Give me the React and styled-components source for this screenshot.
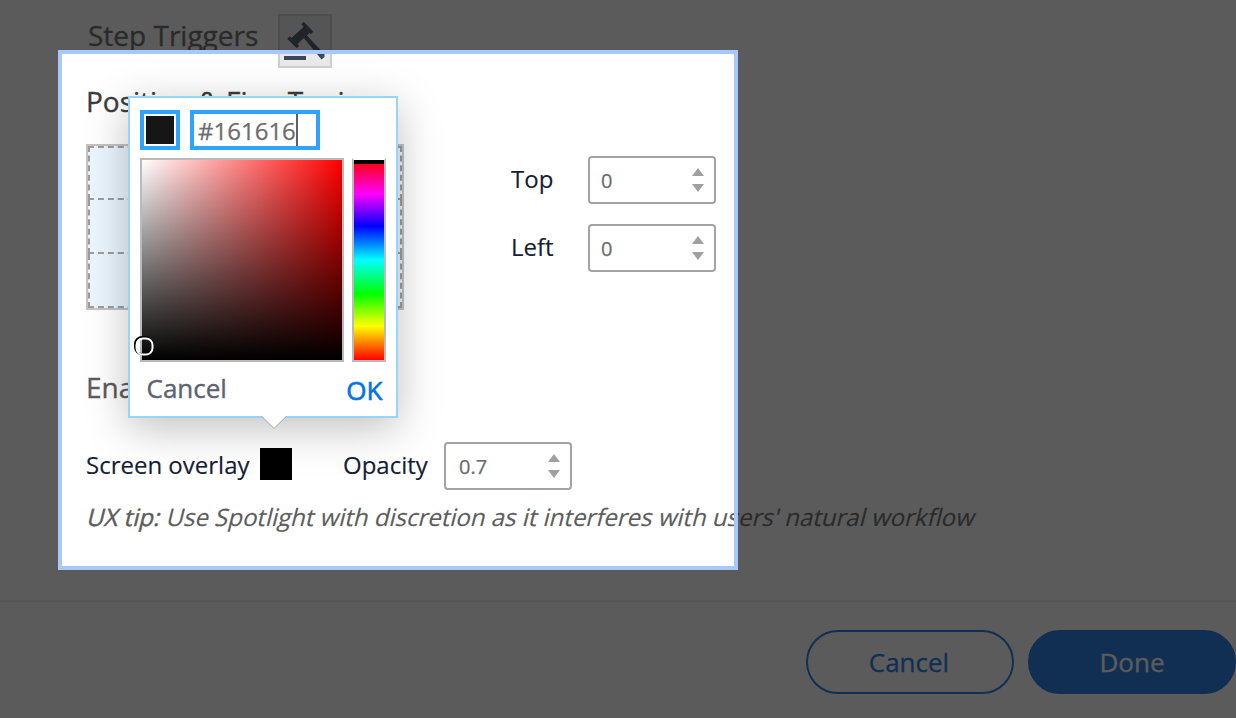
import React from "react";
import styled, { createGlobalStyle, css } from "styled-components";

const Global = createGlobalStyle`
  *, *::before, *::after { box-sizing: border-box; }
  body { margin: 0; background: #fff; overflow: hidden; }
  button, input { font: inherit; }
`;

const Page = styled.main`
  position: relative;
  width: 1236px;
  height: 718px;
  overflow: hidden;
  background: #fff;
  font-family: "Open Sans", "Noto Sans", sans-serif;
  color: #152035;
`;

const Content = styled.div`
  height: 600px;
  padding: 14px 0 0 86px;
`;

const TriggerRow = styled.div`
  display: flex;
  height: 54px;
`;

const Heading = styled.h2`
  margin: 0;
  font-size: 28px;
  line-height: 34px;
  font-weight: 400;
  white-space: nowrap;
  color: ${(p) => p.$color || "#3c3c3c"};
  -webkit-text-stroke: 0.35px currentColor;
`;

const TriggerTitle = styled(Heading)`
  width: 192px;
  padding: 4px 0 0 2px;
`;

const TriggerButton = styled.button`
  width: 54px;
  height: 54px;
  padding: 0;
  border: 2px solid #cfcfcf;
  background: #e9e9e9;
  svg { display: block; }
`;

const PositionTitle = styled(Heading)`
  margin-top: 16px;
  height: 60px;
`;

const PositionRow = styled.div`
  display: flex;
  height: 166px;
`;

const PlacementGrid = styled.div`
  width: 318px;
  height: 166px;
  display: grid;
  grid-template-rows: 54px 54px 1fr;
  border: 2px solid #c4c4c4;
  background: #ebf6ff;
`;

const PlacementCell = styled.div`
  border: 2px dashed #9d9d9d;
  border-top-width: ${(p) => (p.$first ? "2px" : "0")};
`;

const Offsets = styled.div`
  display: flex;
  flex-direction: column;
  gap: 20px;
  padding: 12px 0 0 107px;
`;

const OffsetField = styled.label`
  display: grid;
  grid-template-columns: 77px 128px;
  height: 48px;
`;

const Label = styled.span`
  font-size: 24px;
  line-height: 46px;
  white-space: nowrap;
  -webkit-text-stroke: 0.15px currentColor;
`;

const NumberBox = styled.span`
  display: flex;
  align-items: center;
  justify-content: space-between;
  width: 128px;
  height: 48px;
  padding: 0 10px 0 ${(p) => p.$inset}px;
  border: 2px solid #a3a3a3;
  border-radius: 4px;
  background: #fff;
  color: #6c6c6c;
  font-size: 20px;
  line-height: 44px;
  -webkit-text-stroke: 0.25px currentColor;
`;

const NumberValue = styled.span`
  padding-top: 2px;
  line-height: 42px;
`;

const SpotlightTitle = styled(Heading)`
  margin-top: 60px;
  height: 72px;
`;

const OverlayRow = styled.div`
  display: flex;
  height: 48px;
`;

const OverlayLabel = styled(Label)`
  width: 174px;
`;

const OpacityLabel = styled(Label)`
  width: 101px;
  margin-left: 51px;
`;

const Swatch = styled.span`
  flex: none;
  width: 32px;
  height: 32px;
  margin: 6px 0 0 0;
  background: #000;
`;

const Tip = styled.p`
  width: max-content;
  margin: 10px 0 0 2px;
  font-size: 24px;
  line-height: 34px;
  white-space: nowrap;
  color: #5c5c5c;
  transform: skewX(-14deg);
  -webkit-text-stroke: 0.15px currentColor;
  b { font-weight: 400; -webkit-text-stroke: 0.4px currentColor; }
`;

const Footer = styled.footer`
  display: flex;
  justify-content: flex-end;
  gap: 14px;
  height: 118px;
  padding-top: 28px;
  border-top: 2px solid #ececec;
`;

const PillButton = styled.button`
  width: 208px;
  height: 64px;
  padding: 0 ${(p) => (p.$primary ? "0" : "2px")} 0 0;
  border: 2px solid #056be0;
  border-radius: 32px;
  font-size: 26px;
  line-height: 60px;
  background: ${(p) => (p.$primary ? "#056be0" : "transparent")};
  color: ${(p) => (p.$primary ? "#fff" : "#056be0")};
  -webkit-text-stroke: 0.3px currentColor;
`;

const Spotlight = styled.div`
  position: absolute;
  left: 58px;
  top: 50px;
  width: 680px;
  height: 520px;
  border: 4px solid #a6c8ff;
  box-shadow: 0 0 0 1300px rgba(22, 22, 22, 0.7);
  pointer-events: none;
`;

const Popover = styled.section`
  position: absolute;
  left: 128px;
  top: 96px;
  width: 270px;
  height: 322px;
  padding: 12px 10px 0;
  border: 2px solid #99d4ff;
  background: #fff;
  box-shadow: 0 10px 40px rgba(0, 0, 0, 0.25);
`;

const ColorRow = styled.div`
  display: flex;
  gap: 10px;
  height: 40px;
`;

const focusFrame = css`
  height: 40px;
  border: 4px solid #2fa4ff;
  background: #fff;
`;

const ColorPreview = styled.div`
  ${focusFrame}
  width: 40px;
  padding: 2px;
  &::before { content: ""; display: block; height: 28px; background: #161616; }
`;

const HexField = styled.div`
  ${focusFrame}
  display: flex;
  width: 130px;
  padding-left: 4px;
  font-size: 24px;
  line-height: 33px;
  color: #6c6c6c;
  -webkit-text-stroke: 0.25px currentColor;
`;

const Caret = styled.span`
  width: 2px;
  height: 32px;
  background: #606060;
`;

const PickerRow = styled.div`
  display: flex;
  gap: 8px;
  margin-top: 8px;
`;

const Shade = styled.div`
  position: relative;
  width: 204px;
  height: 204px;
  border: 2px solid #bababa;
  background: linear-gradient(to top, #000, transparent),
    linear-gradient(to right, #fff, rgba(255, 255, 255, 0)), #f00;
`;

const ShadeCursor = styled.svg`
  position: absolute;
  left: -9px;
  top: 175px;
`;

const Hue = styled.div`
  width: 34px;
  height: 204px;
  border: 2px solid #bababa;
  border-top-color: transparent;
  background: linear-gradient(#000 0 4px, transparent 4px),
    linear-gradient(#f00, #f0f 17%, #00f 33%, #0ff 50%, #0f0 67%, #ff0 83%, #f00);
  background-clip: padding-box;
`;

const Actions = styled.div`
  display: flex;
  justify-content: space-between;
  padding: 8px 3.5px 0 6.5px;
`;

const TextButton = styled.button`
  padding: 0;
  border: 0;
  background: none;
  font-size: 26px;
  line-height: 36px;
  height: 36px;
  color: ${(p) => (p.$primary ? "#0073e6" : "#5c6374")};
  margin-top: ${(p) => (p.$primary ? "2px" : "0")};
  -webkit-text-stroke: ${(p) => (p.$primary ? "0.6px" : "0.4px")} currentColor;
`;

const Pointer = styled.svg`
  position: absolute;
  left: 130px;
  top: 316px;
`;

const Gavel = () => (
  <svg width="50" height="50" viewBox="0 0 50 50" fill="none" stroke="#3b485c">
    <path d="M22.500 7 32 17M8.500 21.500 18 31" strokeWidth="3.5" />
    <path d="M12 22 24.500 10.500 29.500 16.500 17 28Z" fill="#3b485c" strokeWidth="1" />
    <path d="M23 21 26 18.500 44.500 38 44.500 41 41.500 43.500Z" fill="#3b485c" stroke="none" />
    <path d="M4 42H26" strokeWidth="4" />
  </svg>
);

const Stepper = () => (
  <svg width="12" height="26" viewBox="0 0 12 26" fill="#a0a0a0">
    <path d="M6 1 12 9H0ZM0 17H12L6 25Z" />
  </svg>
);

const NumberField = ({ value, inset = 11 }) => (
  <NumberBox $inset={inset}>
    <NumberValue>{value}</NumberValue>
    <Stepper />
  </NumberBox>
);

export default function App() {
  return (
    <Page>
      <Global />
      <Content>
        <TriggerRow>
          <TriggerTitle $color="#5c5c5c">Step Triggers</TriggerTitle>
          <TriggerButton aria-label="Step triggers"><Gavel /></TriggerButton>
        </TriggerRow>
        <PositionTitle>Position &amp; Fine Tuning</PositionTitle>
        <PositionRow>
          <PlacementGrid>
            <PlacementCell $first />
            <PlacementCell />
            <PlacementCell />
          </PlacementGrid>
          <Offsets>
            <OffsetField><Label>Top</Label><NumberField value="0" /></OffsetField>
            <OffsetField><Label>Left</Label><NumberField value="0" /></OffsetField>
          </Offsets>
        </PositionRow>
        <SpotlightTitle $color="#5c5c5c">Enable</SpotlightTitle>
        <OverlayRow>
          <OverlayLabel>Screen overlay</OverlayLabel>
          <Swatch />
          <OpacityLabel>Opacity</OpacityLabel>
          <NumberField value="0.7" inset={13} />
        </OverlayRow>
        <Tip><b>UX tip:</b> Use Spotlight with discretion as it interferes with users' natural workflow</Tip>
      </Content>
      <Footer>
        <PillButton>Cancel</PillButton>
        <PillButton $primary>Done</PillButton>
      </Footer>
      <Spotlight />
      <Popover>
        <ColorRow>
          <ColorPreview />
          <HexField>#161616<Caret /></HexField>
        </ColorRow>
        <PickerRow>
          <Shade>
            <ShadeCursor width="22" height="22" viewBox="0 0 22 22" fill="none" strokeWidth="2">
              <rect x="2" y="2" width="17" height="17" rx="7" stroke="#000" />
              <rect x="3.5" y="3.5" width="16" height="16" rx="6.5" stroke="#fff" />
            </ShadeCursor>
          </Shade>
          <Hue />
        </PickerRow>
        <Actions>
          <TextButton>Cancel</TextButton>
          <TextButton $primary>OK</TextButton>
        </Actions>
        <Pointer width="28" height="16" viewBox="0 0 28 16">
          <path d="M0 0 14 13.5 28 0Z" fill="#fff" />
          <path d="M1 2 14 14.5 27 2" fill="none" stroke="#b5b5b5" strokeWidth="1" />
        </Pointer>
      </Popover>
    </Page>
  );
}
